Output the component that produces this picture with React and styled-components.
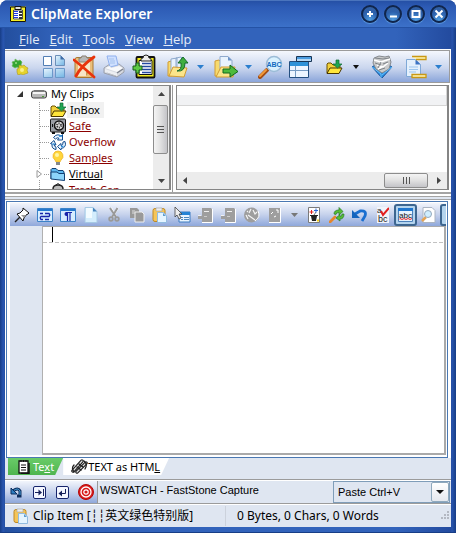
import React from "react";
import styled, { createGlobalStyle, css } from "styled-components";

const tahoma = `"Noto Sans", "Noto Sans CJK SC", sans-serif`;
const segoe = `"Open Sans", "Noto Sans CJK SC", sans-serif`;
const sansSerif = `"Liberation Sans", sans-serif`;

const Global = createGlobalStyle`
  * { box-sizing: border-box; }
  body { margin: 0; background: #fff; font-family: ${tahoma}; }
  button, select, textarea { font: inherit; color: inherit; }
  svg { display: block; flex: none; }
`;

const Window = styled.div`
  min-height: 100vh;
  display: flex;
  flex-direction: column;
  padding: 0 5px 5px;
  background: linear-gradient(90deg, #173d86, #2854ad 3px, #2854ad 4px, #234f9f 5px, #3263bb 60px, #3263bb calc(100% - 60px), #234b9f calc(100% - 5px), #2854ad calc(100% - 4px), #173d86);
  border-radius: 8px 8px 0 0;
  border-bottom: 1px solid #173d86;
  overflow: hidden;
`;
const TitleBar = styled.header`
  height: 28px;
  display: flex;
  align-items: center;
  gap: 5px;
  margin: 0 -5px;
  padding: 0 8px 0 10px;
  border-top: 1px solid #4a74bd;
  border-bottom: 1px solid #2452a5;
  background: linear-gradient(#2550a6, #2d5bb5 6px, #3567bf 18px, #3c71c9);
  color: #fff;
`;
const Title = styled.h1`
  flex: 1;
  margin: 0;
  font: 600 14px/20px ${tahoma};
  white-space: nowrap;
`;
const CaptionButtons = styled.div`
  display: flex;
  gap: 5px;
`;
const CaptionButton = styled.button`
  width: 18px;
  height: 18px;
  padding: 0;
  display: grid;
  place-items: center;
  border: 2px solid #10254b;
  border-radius: 50%;
  background: radial-gradient(circle at 50% 90%, #4f9de0, #2c60ac 55%, #355f9d);
  box-shadow: 0 1px 1px #5c9ae0;
`;
const MenuBar = styled.nav`
  height: 21px;
  display: flex;
  gap: 10px;
  padding: 0 14px;
  font: 13px/20px ${segoe};
`;
const MenuItem = styled.button`
  padding: 0;
  border: 0;
  background: none;
  color: #e4ecf8;
  line-height: 20px;
  &::first-letter { text-decoration: underline; }
`;
const Client = styled.main`
  flex: 1;
  display: flex;
  flex-direction: column;
  background: #fff;
  min-width: 0;
`;
const MainToolbar = styled.div`
  height: 33px;
  margin: 1px 1px 2px 0;
  display: flex;
  align-items: center;
  overflow: hidden;
  border: solid #9b9b9b;
  border-width: 1px 1px 1px 0;
  background: linear-gradient(#f4f7fd, #cad6ee 55%, #8ba5da);
`;
const ToolButton = styled.button`
  flex: none;
  width: ${(p) => (p.$drop ? 14 : 30)}px;
  height: 30px;
  margin-left: ${(p) => (p.$group ? 4 : 0)}px;
  padding: 0;
  display: grid;
  place-items: center;
  border: 0;
  background: none;
`;
const Panels = styled.section`
  display: grid;
  grid-template-columns: 164px 1fr;
  gap: 5px;
  height: 109px;
  padding: 0 2px 2px;
  background: linear-gradient(90deg, #fff 167px, #999 167px, #999 168px, #fff 168px);
  border-bottom: 2px solid #a4a4a4;
`;
const Panel = styled.div`
  display: flex;
  flex-direction: ${(p) => (p.$column ? "column" : "row")};
  overflow: hidden;
  border: 1px solid #858585;
  border-right-width: 2px;
  background: #fff;
  min-width: 0;
`;
const Tree = styled.ul`
  flex: 1;
  margin: 0;
  padding: 0;
  overflow: hidden;
  list-style: none;
  font: 11px/16px ${tahoma};
`;
const TreeRow = styled.li`
  height: 16px;
  display: flex;
  align-items: center;
  padding-left: ${(p) => (p.$root ? 6 : 26)}px;
`;
const Branch = styled.span`
  width: 16px;
  height: 16px;
  flex: none;
  display: grid;
  align-items: center;
  background:
    repeating-linear-gradient(90deg, #999 0 1px, transparent 1px 2px) 6px 8px / 9px 1px no-repeat,
    repeating-linear-gradient(#999 0 1px, transparent 1px 2px) 5px 0 / 1px 16px no-repeat;
`;
const Expander = styled.button`
  padding: 0 0 0 2px;
  width: ${(p) => (p.$root ? 17 : 10)}px;
  height: 10px;
  border: 0;
  background: ${(p) => (p.$root ? "none" : "#fff")};
`;
const TreeLabel = styled.button`
  height: 16px;
  margin-left: ${(p) => (p.$root ? 1 : 0)}px;
  padding: 0 4px 0 3px;
  border: 0;
  background: ${(p) => (p.$selected ? "#f1f1f1" : "none")};
  color: ${(p) => (p.$dark ? "#000" : "#8b0000")};
  text-decoration: ${(p) => (p.$underline ? "underline" : "none")};
  line-height: 16px;
  white-space: nowrap;
`;
const ScrollBar = styled.div`
  display: flex;
  flex: none;
  flex-direction: ${(p) => (p.$vertical ? "column" : "row")};
  ${(p) => (p.$vertical ? "width: 16px;" : "height: 17px;")}
  background: #ececec;
`;
const ScrollArrow = styled.button`
  flex: none;
  width: 17px;
  height: 17px;
  padding: 0;
  display: grid;
  place-items: center;
  border: 0;
  background: none;
`;
const ScrollThumb = styled.div`
  flex: none;
  display: grid;
  place-items: center;
  border: 1px solid #8d8d8d;
  border-radius: 2px;
  ${(p) =>
    p.$vertical
      ? css`
          height: 49px;
          margin: 2px 1px 0 0;
          background: linear-gradient(90deg, #f4f4f4, #e3e3e3 45%, #c4c4c8);
        `
      : css`
          width: 44px;
          margin: 1px 2px 1px auto;
          background: linear-gradient(#f4f4f4, #e3e3e3 45%, #c4c4c8);
        `}
`;
const ListHeader = styled.div`
  height: 20px;
  border: solid #d5d5d5;
  border-width: 0 1px 1px 0;
  background: linear-gradient(#fff 50%, #f1f2f4 50%);
`;
const ListBody = styled.div`
  flex: 1;
`;
const Splitter = styled.div`
  height: 6px;
  border: solid #a4a4a4;
  border-width: 0 0 1px;
  background: linear-gradient(#fff 2px, #a4a4a4 2px, #a4a4a4 3px, #dfe6f1 3px);
`;
const EditorPane = styled.section`
  flex: 1;
  display: flex;
  flex-direction: column;
  margin: 1px 3px 0 1px;
  padding: 1px 1px 2px 3px;
  border: 1px solid #4a78b2;
  background: #fff;
  min-width: 0;
`;
const EditorToolbar = styled.div`
  height: 23px;
  display: flex;
  align-items: center;
  overflow: hidden;
  background: linear-gradient(#f2f5fc, #c6d2ec 50%, #8fa8db);
`;
const EditButton = styled.button`
  flex: none;
  width: ${(p) => (p.$drop ? 16 : 23)}px;
  height: 22px;
  padding: 0;
  display: grid;
  place-items: center;
  border: ${(p) => (p.$pressed ? "2px solid #3d6690" : "0")};
  border-radius: 3px;
  background: ${(p) => (p.$pressed ? "#b4d4ee" : "none")};
`;
const EditorBody = styled.div`
  flex: 1;
  display: grid;
  grid-template-columns: 33px 1fr;
`;
const Gutter = styled.div`
  background: #dfe6f1;
  border-right: 1px solid #b0b0b0;
`;
const Page = styled.div`
  position: relative;
  display: grid;
  border: solid #aaa;
  border-width: 1px 2px 2px 0;
  background: repeating-linear-gradient(90deg, #c2c2c2 0 4px, #fff 4px 6px) 0 15px / 100% 1px no-repeat #fff;
`;
const TextArea = styled.textarea`
  width: 100%;
  padding: 0 9px;
  border: 0;
  outline: 0;
  resize: none;
  background: none;
  caret-color: transparent;
  font: 12px/15px ${sansSerif};
`;
const Caret = styled.span`
  position: absolute;
  left: 9px;
  top: 0;
  width: 1px;
  height: 15px;
  background: #000;
`;
const TabStrip = styled.div`
  height: 21px;
  display: flex;
  align-items: flex-start;
  padding-left: 3px;
  background: #dfe6f1;
  font: 11px/16px ${tahoma};
`;
const Tab = styled.button`
  height: 17px;
  display: flex;
  align-items: center;
  gap: ${(p) => (p.$active ? 3 : 0)}px;
  padding: ${(p) => (p.$active ? "0 9px 0 10px" : "0 9px 0 8px")};
  border: 0;
  clip-path: polygon(0 0, 100% 0, calc(100% - 8px) 100%, 0 100%);
  background: ${(p) => (p.$active ? "linear-gradient(#69cb68, #4fb54f)" : "#fff")};
  color: ${(p) => (p.$active ? "#fff" : "#000")};
  white-space: nowrap;
`;
const PasteBar = styled.div`
  height: 25px;
  display: flex;
  align-items: stretch;
  border: solid #9b9b9b;
  border-width: 1px 0;
  padding-top: 1px;
  background: #dfe6f1;
  box-shadow: inset 0 1px #fff;
  font: 11px/16px ${sansSerif};
`;
const PasteTools = styled.div`
  display: flex;
  align-items: center;
  background: linear-gradient(#f2f5fc, #c6d2ec 50%, #8fa8db);
  border-right: 1px solid #999;
`;
const Target = styled.output`
  flex: 1;
  padding-left: 2px;
  line-height: 18px;
  white-space: nowrap;
  overflow: hidden;
`;
const Combo = styled.div`
  flex: none;
  width: 117px;
  display: grid;
  grid-template-columns: 1fr 18px;
  margin-right: 1px;
  border: 1px solid #7f9db9;
  & > * { grid-row: 1; }
`;
const Select = styled.select`
  grid-column: 1 / 3;
  width: 100%;
  appearance: none;
  padding: 0 4px;
  border: 0;
  border-radius: 0;
  background: #dfe6f1;
`;
const ComboArrow = styled.span`
  grid-column: 2;
  display: grid;
  place-items: center;
  border: 1px solid #8fa9bd;
  border-radius: 2px;
  background: linear-gradient(#fff, #e5e8ee);
  pointer-events: none;
`;
const StatusBar = styled.footer`
  height: 23px;
  display: flex;
  align-items: center;
  padding: 0 1px 0 8px;
  border-top: 1px solid #fff;
  background: #dfe6f1;
  font: 12px/20px ${tahoma};
  white-space: nowrap;
`;
const StatusCell = styled.span`
  display: flex;
  align-items: center;
  gap: 4px;
  width: ${(p) => (p.$wide ? "213px" : "auto")};
  flex: ${(p) => (p.$wide ? "none" : "1")};
  padding-left: ${(p) => (p.$wide ? 0 : 11)}px;
  border-right: ${(p) => (p.$wide ? "1px solid #ccd2dc" : "0")};
`;
const Bars = styled.span`
  font-family: "DejaVu Sans Mono", monospace;
`;

const Icon = ({ w = 16, h = w, box, children }) => (
  <svg width={w} height={h} viewBox={box || `0 0 ${w} ${h}`} aria-hidden="true">{children}</svg>
);

const Down = ({ color = "#2b7fce", s = 7 }) => (
  <Icon w={s} h={4}><path d={`M0 0h${s}L${s / 2} 4z`} fill={color} /></Icon>
);

const AppIcon = () => (
  <Icon w={16}>
    <path d="M1.500 2h13v13h-13z" fill="#fff" stroke="#f4ee20" strokeWidth="3" />
    <path d="M.5.500M.500 1h15v14.500H.500z" fill="none" stroke="#111" />
    <path d="M3.500 4h9v9h-9z" fill="none" stroke="#222" strokeWidth=".8" />
    <path d="M5 .500h6v3H5z" fill="#ddd" stroke="#111" />
    <path d="M4 5.500h4M4 7.500h4M4 9.500h4M4 11.500h4" stroke="#1c35e8" />
    <path d="M10.500 5v8" stroke="#333" strokeWidth="3" strokeDasharray="2 1" />
  </Icon>
);
const Puzzle = () => (
  <Icon w={18} h={17}>
    <path d="M1 4l3-1V1l3 2 2-1 2 2-1 3 1 2-3 1-2-1-2 1-3-2 1-2z" fill="#33a532" stroke="#6fb85a" strokeWidth=".7" />
    <circle cx="5" cy="5" r="1" fill="#9be08a" />
    <path d="M6 11l2-1V7l3 1 2-1 2 2 2 1-1 2 1 3-3 1-2 1-2-1-3 1-1-3z" fill="#e5d22c" stroke="#ab9820" strokeWidth=".6" />
    <circle cx="11" cy="12" r="2" fill="#faf08a" />
  </Icon>
);
const Grid = () => (
  <Icon w={22} h={24}>
    <defs><linearGradient id="sky" x2="1" y2="1"><stop stopColor="#e9f6fe" /><stop offset="1" stopColor="#71b4e4" /></linearGradient></defs>
    <path d="M.500 1.500h8v9h-8z" fill="#fff" stroke="#527eb4" />
    <path d="M12.500.500h5l4 4v6h-9z" fill="url(#sky)" stroke="#6d8fb8" />
    <path d="M17.500.500v4h4z" fill="#3f6ca8" />
    <path d="M.500 13.500h9v9h-9zM12.500 13.500h9v9h-9z" fill="url(#sky)" stroke="#6c98c9" />
  </Icon>
);
const Cross = () => (
  <Icon w={23} h={24}>
    <rect x="2" y="2.500" width="18" height="20" rx="2" fill="#e9bf7c" stroke="#aa7931" />
    <path d="M5 6h12v11l-4 4H5z" fill="#f7e6c8" />
    <path d="M13 21v-4h4z" fill="#c99a52" />
    <path d="M6 3h2l1-2h4l1 2h2v4H6z" fill="#b7b7b7" stroke="#8a8174" />
    <path d="M1 5Q9 11 21 22M21 2Q8 11 3 21" fill="none" stroke="#e8330d" strokeWidth="2.800" strokeLinecap="round" />
  </Icon>
);
const Printer = () => (
  <Icon w={22} h={23}>
    <path d="M1 13l6-4h9l5 4v4l-7 5L1 18z" fill="#d6d9e0" stroke="#9a9fab" />
    <path d="M4 1h9l2 9-8 2z" fill="#cfe0ff" stroke="#8fb0ee" />
    <path d="M6 4h5M7 6h5M7 8h5" stroke="#a4c1ec" />
    <path d="M2 13l5-2 1 2 8-2 4 2-6 4z" fill="#f8f9fb" />
    <path d="M4 17l9 3M14 18l6-4" fill="none" stroke="#7f8490" strokeWidth="1.500" />
    <path d="M2 14l12 4v3L2 17z" fill="#eceef2" />
  </Icon>
);
const ClipPlus = () => (
  <Icon w={24} h={25}>
    <rect x="4.500" y="3" width="18" height="20.500" rx="1" fill="#f2eb1c" stroke="#111" strokeWidth="1.800" />
    <path d="M7 6.500h13v14H7z" fill="#fff" stroke="#111" />
    <path d="M9 5q0-1 2-1 0-3 3-3t3 3q2 0 2 1v2H9z" fill="#ececec" stroke="#222" />
    <path d="M10 9.500h9M10 12.500h9M10 15.500h9M10 18.500h9" stroke="#2448a0" strokeWidth="1.500" />
    <path d="M4 9h3v3h3v4H7v3H4v-3H1v-4h3z" fill="#5cc945" stroke="#18601d" />
  </Icon>
);
const FolderUp = () => (
  <Icon w={22} h={24}>
    <path d="M1 7l3-1 1 2v13H1z" fill="#f7da6e" stroke="#d19c33" />
    <path d="M4 4l6-1v14H4zM9 3l5-1 3 3v12H9z" fill="#e8f2fd" stroke="#8fa9cc" />
    <path d="M14 2v3h3z" fill="#6c93c8" />
    <path d="M2 21l4-9 14 1-3 9z" fill="#fbe58a" stroke="#d19c33" />
    <path d="M10 16q5-1 4-8h-3l5-6 5 6h-3q0 9-8 8z" fill="#3fae3f" stroke="#156b2a" />
  </Icon>
);
const FolderRight = () => (
  <Icon w={25} h={24}>
    <path d="M1 6l4-1 2 2v14H1z" fill="#f7da6e" stroke="#d19c33" />
    <path d="M6 1.500h8l4 4V16H6z" fill="#e8f2fd" stroke="#8fa9cc" />
    <path d="M14 1.500v4h4z" fill="#6c93c8" />
    <path d="M2 22l5-10h14l-2 10z" fill="#fbe58a" stroke="#d19c33" />
    <path d="M9 14h7v-4l8 6.500-8 5.500v-4H9z" fill="#4dbb3c" stroke="#12691c" />
  </Icon>
);
const AbcLens = () => (
  <Icon w={25} h={24}>
    <path d="M2 22l7-7" stroke="#a24e16" strokeWidth="4" strokeLinecap="round" />
    <path d="M2 21l6-6" stroke="#f29a39" strokeWidth="2" strokeLinecap="round" />
    <circle cx="16" cy="9" r="7.500" fill="#d9f2ff" stroke="#9cbcd7" strokeWidth="1.500" />
    <text x="16" y="11.500" textAnchor="middle" fontFamily="Liberation Sans" fontWeight="700" fontSize="7" fill="#126bc0">ABC</text>
  </Icon>
);
const WindowIcon = () => (
  <Icon w={24} h={24}>
    <path d="M1.500 6.500h19v16h-19z" fill="#edf5ff" stroke="#244f80" />
    <path d="M2 7h18v4H2z" fill="#2e92d8" />
    <path d="M7.500 11v11M2 15.500h18" stroke="#779bc2" />
    <path d="M8.500 1.500h15v5h-15z" fill="#b5d8f5" stroke="#173454" />
    <path d="M9 2h14v2H9z" fill="#4c9de1" />
  </Icon>
);
const InFolder = () => (
  <Icon w={17} h={16}>
    <path d="M1 14V5l1-1h3l2 2h6l1 1v3" fill="#f3d23c" stroke="#6b5000" />
    <path d="M1 14.500L4 9h12l-3 5.500z" fill="#ffe63a" stroke="#4a3600" />
    <path d="M10 1h3v4h3l-4.500 4L7 5h3z" fill="#20a652" stroke="#116a34" strokeWidth=".7" />
  </Icon>
);
const Gem = () => (
  <Icon w={22} h={24}>
    <path d="M1 12l10 11 10-11-3-2H4z" fill="#258be0" stroke="#1e5396" />
    <path d="M3 3l5-2 6 1 4-1 2 6-2 7-7 4-6-4-3-6z" fill="#c9cacb" stroke="#85898e" />
    <path d="M3 5l7 2 9-3M6 10l6 2 5-4M7 14l4-2" fill="none" stroke="#fff" strokeWidth="1.500" />
    <path d="M4 3l8 1 6-1M4 8l6 2M12 9l5-2M8 15l6-2M10 7l-3 6" fill="none" stroke="#7e8388" />
    <path d="M1 12l9 7v4M21 12l-10 8" fill="none" stroke="#69c1fb" />
  </Icon>
);
const DocMarks = () => (
  <Icon w={22} h={24}>
    <path d="M1.500 4.500h9l5 5v12h-14z" fill="#e4f0fc" stroke="#7fa9d7" />
    <path d="M10.500 4.500v5h5z" fill="#3b73c4" />
    <path d="M4 12h9M4 14.500h9M4 17h7" stroke="#9bc5ee" />
    <path d="M7 1.500h14v3H11M7 19.500h14v3H7z" fill="#fff6b6" stroke="#c99814" strokeWidth="1.300" />
  </Icon>
);
const Drive = () => (
  <Icon w={16} h={10}><rect x=".5" y="2" width="15" height="7" rx="2" fill="#b8b8b8" stroke="#444" /><path d="M3 1.500h10" stroke="#777" /><path d="M2 4h12" stroke="#f4f4f4" strokeWidth="2" /><path d="M11 7.500h2" stroke="#4b9d34" /></Icon>
);
const Safe = () => (
  <Icon w={16}><rect x=".5" y="1" width="15" height="13" rx="1" fill="#9a9ea4" stroke="#181818" /><circle cx="9" cy="7.500" r="4.500" fill="#ddd" stroke="#111" strokeWidth="1.500" /><circle cx="9" cy="7.500" r="2" fill="none" stroke="#333" strokeDasharray="1 1" strokeWidth="2" /><path d="M2.500 6v3" stroke="#111" /><path d="M2 15h3M11 15h3" stroke="#111" strokeWidth="2" /></Icon>
);
const Recycle = () => (
  <Icon w={16}>
    <g fill="#eaf6ff" stroke="#114b8e" strokeWidth="1">
      <path d="M3.500 3.500Q7-1 11 2l1.500-1.500V6H7.500L9 4.200Q7 3 5.500 5z" />
      <path d="M4 6.500l2 4.500-1.800-.500Q4 12.500 6 13v2.500Q1.500 15 2 10L.500 9.500z" />
      <path d="M15 7.500q2 6-4 7V16l-3.500-3.500L11 9.500v2.200q2.500-.700 2-3.700z" />
    </g>
    <path d="M9 2h3M2.500 10h2M11 12.500h2.500" stroke="#2d8fdc" strokeWidth="1.500" />
  </Icon>
);
const Bulb = () => (
  <Icon w={16}><path d="M8 1a5 5 0 0 0-3 9l1 2h4l1-2a5 5 0 0 0-3-9z" fill="#ffd63c" stroke="#efb428" strokeWidth=".8" /><circle cx="7" cy="5" r="2" fill="#fff5a6" /><path d="M6 12h4v3H6z" fill="#83888c" /></Icon>
);
const BlueFolder = () => (
  <Icon w={16} h={14}><path d="M1 12V2.500l1-1h4l2 2h5l1 1.500v7" fill="#5db8f0" stroke="#123f72" /><path d="M1 5h6l2 1.500h5.500v7L1 12z" fill="#8cd4fb" stroke="#123f72" /></Icon>
);
const Trash = () => (
  <Icon w={16}><path d="M3 7q0-4 5-4t5 4l1 2H2z" fill="#bbb" stroke="#222" strokeWidth="1.500" /><path d="M6 3q2-3 4 0" fill="none" stroke="#222" /><path d="M3 9h10v6H3z" fill="#aaa" stroke="#222" /></Icon>
);
const Pin = () => (
  <Icon w={16}><path d="M1 15l5-5" stroke="#222" strokeWidth="1.500" /><path d="M3 7l3-1 3-3V1l6 5-1 1-2 1-2 3-1 3z" fill="#fff" stroke="#111" /><path d="M7 8l3 3 2-3" fill="#999" /></Icon>
);
const WrapIcon = () => (
  <Icon w={16} h={14}><path d="M.5.5h15v13H.500z" fill="#d6edff" stroke="#3c83c8" /><path d="M1 1h14v2H1z" fill="#2578cf" /><path d="M3 5.500h3M8 5.500h4q1.500 1.500 0 3H4q-1.500 1 0 3h2M8 11.500h4" fill="none" stroke="#1825a9" strokeWidth="1.300" /></Icon>
);
const ParaIcon = () => (
  <Icon w={16} h={14}><path d="M.5.5h15v13H.500z" fill="#d6edff" stroke="#3c83c8" /><path d="M1 1h14v2H1z" fill="#2578cf" /><path d="M7.500 4H6.500a2 2 0 0 0 0 4h1z" fill="#1825a9" /><path d="M7.500 4v9M10 4v9M6 4.500h6" stroke="#1825a9" strokeWidth="1.200" /></Icon>
);
const NewDoc = () => (
  <Icon w={14} h={16}><path d="M1 .500h8l4 4v11H1z" fill="#d4edfc" stroke="#a6c9e4" /><path d="M2 1h6v10H2z" fill="#f2fbff" /><path d="M9 .500v4h4z" fill="#4884bd" /></Icon>
);
const Cut = () => (
  <Icon w={12} h={15}><path d="M3 1l5 9M10 1L4 10" stroke="#fff" strokeWidth="2" /><path d="M2 1l6 9M9.500 1L4 10" stroke="#999" strokeWidth="2" /><circle cx="3" cy="12" r="1.800" fill="none" stroke="#999" strokeWidth="1.800" /><circle cx="9" cy="12" r="1.800" fill="none" stroke="#999" strokeWidth="1.800" /></Icon>
);
const Copy = () => (
  <Icon w={16}><path d="M1 1h7l2 2v8H1z" fill="#999" /><path d="M6 5h7l2 2v8H6z" fill="#999" stroke="#eee" /><path d="M3 4h3M3 6h3" stroke="#ddd" /></Icon>
);
const Paste = () => (
  <Icon w={16}><rect x="1" y="1.500" width="12" height="13" rx="2" fill="#f5c558" stroke="#be8926" /><path d="M4 1h6v3H4z" fill="#eee" stroke="#aaa" strokeWidth=".7" /><path d="M5.500 5.500h6l3 3v7h-9z" fill="#e4f4ff" stroke="#91bbdf" /><path d="M11 6v3h3z" fill="#5d9bcf" /></Icon>
);
const CursorForm = () => (
  <Icon w={17} h={16}><path d="M5 5h11v10H5z" fill="#e9f5ff" stroke="#3a7bc1" /><path d="M5 5h11v3H5z" fill="#2684d5" /><path d="M7 10.500h2M10 10.500h5M7 12.500h2M10 12.500h5" stroke="#4e88bd" /><path d="M1 0v10l2-2 2 4 2-1-2-4h3z" fill="#eee" stroke="#444" strokeWidth=".8" /></Icon>
);
const GrayBook = () => (
  <Icon w={16}><path d="M4 1h9l1 1v13H4v-3H0V9h4z" fill="#9e9e9e" /><path d="M14.500 2v13.500H4" fill="none" stroke="#fff" /><path d="M6 4.500h5M0 8.500h3" stroke="#f0f0f0" /><path d="M6 9.500h3" stroke="#ccc" /></Icon>
);
const GrayDoc = () => (
  <Icon w={14} h={16}><path d="M1 1h11v14H1z" fill="#9e9e9e" /><path d="M12.500 1v14.500H1" fill="none" stroke="#fff" /><path d="M3 7l2-2M8 3h2v3M6 10l2-1" fill="none" stroke="#fff" /></Icon>
);
const GrayGlobe = () => (
  <Icon w={17} h={16}><circle cx="8.500" cy="8" r="7.500" fill="#9e9e9e" /><path d="M4 4l1 1M5 8l7 5M10 3l2 4 2-2M3 8l2 4M8 2L6 6" fill="none" stroke="#f4f4f4" strokeWidth="1.200" /><path d="M15 4q3 6-3 10" fill="none" stroke="#fff" /></Icon>
);
const Magic = () => (
  <Icon w={12} h={16}><path d="M.500.500h11v15H.500z" fill="#fff" stroke="#7a7a7a" /><path d="M3 9h6l-1 5H4z" fill="#222" /><path d="M2 8.500h8" stroke="#222" /><path d="M6 8l2-3" stroke="#777" /><path d="M3.500 3v4M1.500 5h4" stroke="#e02222" /><path d="M8 1.500v4M6 3.500h4" stroke="#2563db" /><path d="M9 13.500h2" stroke="#f1cd19" strokeWidth="2" /></Icon>
);
const FindNext = () => (
  <Icon w={16}><path d="M1 15l5-5" stroke="#e5862d" strokeWidth="2.800" strokeLinecap="round" /><path d="M5 7q0-4 5-4V.500l4 4-4 3.500V5.500q-3 0-3 2zM15 7q0 5-4 5v2L7 11l4-3.500v2q2 0 2-2.500z" fill="#55be33" stroke="#26792a" strokeWidth=".7" /></Icon>
);
const Undo = () => (
  <Icon w={16} h={14}><path d="M3 6l5-3q7-1 5 5l-3 5" fill="none" stroke="#1a6fd0" strokeWidth="2.800" /><path d="M0 2v8h8z" fill="#1464bd" /></Icon>
);
const SpellIcon = () => (
  <Icon w={12} h={16}><path d="M0 0h12v16H0z" fill="#f1f4fa" /><text x="0" y="6" fontFamily="Liberation Sans" fontSize="8" fill="#222">a</text><text x="1" y="15" fontFamily="Liberation Sans" fontSize="9" fill="#222">bc</text><path d="M4 4l2 4 6-7" fill="none" stroke="#e32020" strokeWidth="2" /></Icon>
);
const AbcIcon = () => (
  <Icon w={15} h={14}><path d="M.5.5h14v13H.500z" fill="#e6f2fd" stroke="#4c81ba" /><path d="M0 0h15v3H0z" fill="#1f76cd" /><text x="7.500" y="9.500" textAnchor="middle" fontFamily="Liberation Sans" fontSize="8" fill="#111">abc</text><path d="M1 11.500l1-1 2 1 2-1 2 1 2-1 2 1 2-1" fill="none" stroke="#e22" /></Icon>
);
const Preview = () => (
  <Icon w={15} h={16}><path d="M2 .500h9l3 3v12H2z" fill="#fff" stroke="#aab4c2" /><path d="M1 14l4-4" stroke="#e5a556" strokeWidth="2.500" /><circle cx="7" cy="7" r="3.500" fill="#cfeeff" stroke="#94a9bc" /></Icon>
);
const PageTab = () => (
  <Icon w={12} h={14}><path d="M1 1h9v12H1z" fill="#fff" stroke="#111" strokeWidth="1.300" /><path d="M11 3v10.500H3" fill="none" stroke="#111" strokeWidth="1.500" /><path d="M3 0v2M5.500 0v2M8 0v2M3 5h5M3 7.500h5M3 10h5" stroke="#111" /></Icon>
);
const HtmlTab = () => (
  <Icon w={17} h={15}>
    <g fill="none" strokeLinecap="round">
      <path d="M2 12L11 2M6 13l9-9" stroke="#222" strokeWidth="3.500" />
      <path d="M2 12L11 2M6 13l9-9" stroke="#ddd" strokeWidth="1.200" />
      <path d="M3 6q-3 3 0 7M13 2q4 3 1 8M6 8l4 3M8 5l4 3" stroke="#222" strokeWidth="1.300" />
    </g>
  </Icon>
);
const SmallUndo = () => (
  <Icon w={13} h={12}><path d="M3 5q5-4 7 0v5H7" fill="none" stroke="#0d2d5d" strokeWidth="3" /><path d="M3 5q5-4 7 0v4" fill="none" stroke="#4ba2db" /><path d="M1 2v6h6z" fill="#2d7cc0" stroke="#0d2d5d" /></Icon>
);
const KeyIcon = ({ enter }) => (
  <Icon w={13} h={13}><rect x=".5" y=".5" width="12" height="12" rx="1.500" fill="#f4f7ff" stroke="#16246c" />{enter ? <><path d="M9.500 3v4.500H5" fill="none" stroke="#15205a" /><path d="M6 4.500v6l-3.500-3z" fill="#15205a" /></> : <><path d="M2 6.500h4M10.500 3v7" stroke="#15205a" /><path d="M5.500 3.500v6l3.500-3z" fill="#15205a" /></>}</Icon>
);
const Bullseye = () => (
  <Icon w={16}><circle cx="8" cy="8" r="7.500" fill="#d91b1b" stroke="#b30909" /><circle cx="8" cy="8" r="5" fill="none" stroke="#fff" strokeWidth="1.300" /><circle cx="8" cy="8" r="2.200" fill="none" stroke="#fff" strokeWidth="1.200" /></Icon>
);
const Grip = ({ vertical }) => (
  <Icon w={9} h={9}><path d={vertical ? "M1 1.500h7M1 4.500h7M1 7.500h7" : "M1.500 1v7M4.500 1v7M7.500 1v7"} stroke="#555" /></Icon>
);
const ArrowGlyph = ({ dir }) => {
  const d = { up: "M1 6l3.500-4L8 6z", down: "M1 3l3.500 4L8 3z", left: "M6 1L2 4.500 6 8z", right: "M3 1l4 3.500L3 8z" }[dir];
  return <Icon w={9} h={9}><path d={d} fill="#444" /></Icon>;
};

const mainTools = [
  { label: "Options", icon: <Puzzle /> },
  { label: "Views", icon: <Grid />, group: true },
  { label: "Delete", icon: <Cross /> },
  { label: "Print", icon: <Printer /> },
  { label: "New clip", icon: <ClipPlus /> },
  { label: "Move to", icon: <FolderUp />, group: true },
  { label: "Move to choices", icon: <Down />, drop: true },
  { label: "Copy to", icon: <FolderRight />, group: true },
  { label: "Copy to choices", icon: <Down />, drop: true },
  { label: "Search", icon: <AbcLens /> },
  { label: "Switch view", icon: <WindowIcon /> },
  { label: "Collection", icon: <InFolder />, group: true },
  { label: "Collection choices", icon: <Down color="#111" s={6} />, drop: true },
  { label: "PowerPaste", icon: <Gem />, group: true },
  { label: "Templates", icon: <DocMarks />, group: true },
  { label: "Template choices", icon: <Down />, drop: true },
];

const clips = [
  { name: "InBox", icon: <InFolder />, dark: true, selected: true },
  { name: "Safe", icon: <Safe />, underline: true },
  { name: "Overflow", icon: <Recycle /> },
  { name: "Samples", icon: <Bulb />, underline: true },
  { name: "Virtual", icon: <BlueFolder />, dark: true, underline: true, expandable: true },
  { name: "Trash Can", icon: <Trash /> },
];

const editTools = [
  { label: "Pin", icon: <Pin /> },
  { label: "Word wrap", icon: <WrapIcon /> },
  { label: "Show paragraphs", icon: <ParaIcon /> },
  { label: "New", icon: <NewDoc /> },
  { label: "Cut", icon: <Cut /> },
  { label: "Copy", icon: <Copy /> },
  { label: "Paste", icon: <Paste /> },
  { label: "Select all", icon: <CursorForm /> },
  { label: "Export", icon: <GrayBook /> },
  { label: "Import", icon: <GrayBook /> },
  { label: "Open link", icon: <GrayGlobe /> },
  { label: "Convert", icon: <GrayDoc /> },
  { label: "Convert choices", icon: <Down color="#777" />, drop: true },
  { label: "Clean up", icon: <Magic /> },
  { label: "Find and replace", icon: <FindNext /> },
  { label: "Undo", icon: <Undo /> },
  { label: "Check spelling", icon: <SpellIcon /> },
  { label: "Live spelling", icon: <AbcIcon />, pressed: true },
  { label: "Preview", icon: <Preview /> },
  { label: "More", icon: null, pressed: true },
];

const captions = [
  { label: "Roll up", d: "M5 2v6M2 5h6" },
  { label: "Minimize", d: "M2 7.500h7" },
  { label: "Maximize", d: "M1.500 2h7v6h-7z" },
  { label: "Close", d: "M1.500 1.500l7 7M8.500 1.500l-7 7" },
];

export default function App() {
  return (
    <>
      <Global />
      <Window>
        <TitleBar>
          <AppIcon />
          <Title>ClipMate Explorer</Title>
          <CaptionButtons>
            {captions.map((c) => (
              <CaptionButton key={c.label} aria-label={c.label}>
                <Icon w={10}><path d={c.d} fill="none" stroke="#fff" strokeWidth="2" /></Icon>
              </CaptionButton>
            ))}
          </CaptionButtons>
        </TitleBar>
        <MenuBar>
          {["File", "Edit", "Tools", "View", "Help"].map((m) => <MenuItem key={m}>{m}</MenuItem>)}
        </MenuBar>
        <Client>
          <MainToolbar role="toolbar" aria-label="Main">
            {mainTools.map((t) => (
              <ToolButton key={t.label} aria-label={t.label} $drop={t.drop} $group={t.group}>{t.icon}</ToolButton>
            ))}
          </MainToolbar>
          <Panels>
            <Panel>
              <Tree>
                <TreeRow $root>
                  <Expander $root aria-label="Collapse My Clips">
                    <Icon w={8}><path d="M7 1v6H1z" fill="#333" /></Icon>
                  </Expander>
                  <Drive />
                  <TreeLabel $root $dark>My Clips</TreeLabel>
                </TreeRow>
                {clips.map((c) => (
                  <TreeRow key={c.name}>
                    <Branch>
                      {c.expandable && (
                        <Expander aria-label={`Expand ${c.name}`}>
                          <Icon w={7} h={8}><path d="M1 .500v7l4.500-3.500z" fill="#fff" stroke="#999" /></Icon>
                        </Expander>
                      )}
                    </Branch>
                    {c.icon}
                    <TreeLabel $dark={c.dark} $selected={c.selected} $underline={c.underline}>{c.name}</TreeLabel>
                  </TreeRow>
                ))}
              </Tree>
              <ScrollBar $vertical>
                <ScrollArrow aria-label="Scroll up"><ArrowGlyph dir="up" /></ScrollArrow>
                <ScrollThumb $vertical><Grip vertical /></ScrollThumb>
                <ListBody />
                <ScrollArrow aria-label="Scroll down"><ArrowGlyph dir="down" /></ScrollArrow>
              </ScrollBar>
            </Panel>
            <Panel $column>
              <ListHeader />
              <ListBody />
              <ScrollBar>
                <ScrollArrow aria-label="Scroll left"><ArrowGlyph dir="left" /></ScrollArrow>
                <ScrollThumb><Grip /></ScrollThumb>
                <ScrollArrow aria-label="Scroll right"><ArrowGlyph dir="right" /></ScrollArrow>
              </ScrollBar>
            </Panel>
          </Panels>
          <Splitter />
          <EditorPane>
            <EditorToolbar role="toolbar" aria-label="Editor">
              {editTools.map((t) => (
                <EditButton key={t.label} aria-label={t.label} $drop={t.drop} $pressed={t.pressed}>{t.icon}</EditButton>
              ))}
            </EditorToolbar>
            <EditorBody>
              <Gutter />
              <Page>
                <TextArea aria-label="Clip text" />
                <Caret />
              </Page>
            </EditorBody>
          </EditorPane>
          <TabStrip>
            <Tab $active><PageTab /><span>Te<u>x</u>t</span></Tab>
            <Tab><HtmlTab /><span>TEXT as HTM<u>L</u></span></Tab>
          </TabStrip>
          <PasteBar>
            <PasteTools>
              <EditButton aria-label="Undo paste"><SmallUndo /></EditButton>
              <EditButton aria-label="Send tab"><KeyIcon /></EditButton>
              <EditButton aria-label="Send enter"><KeyIcon enter /></EditButton>
              <EditButton aria-label="Target"><Bullseye /></EditButton>
            </PasteTools>
            <Target>WSWATCH - FastStone Capture</Target>
            <Combo>
              <Select aria-label="Paste keys" defaultValue="v">
                <option value="v">Paste Ctrl+V</option>
              </Select>
              <ComboArrow><Down color="#111" s={8} /></ComboArrow>
            </Combo>
          </PasteBar>
          <StatusBar>
            <StatusCell $wide>
              <Paste />
              <span>Clip Item [<Bars>┆┆</Bars>英文绿色特别版]</span>
            </StatusCell>
            <StatusCell>0 Bytes, 0 Chars, 0 Words</StatusCell>
            <Icon w={10}><path d="M7 1h2M4 4h2M7 4h2M1 7h2M4 7h2M7 7h2" stroke="#b3b8c2" strokeWidth="2" /></Icon>
          </StatusBar>
        </Client>
      </Window>
    </>
  );
}
